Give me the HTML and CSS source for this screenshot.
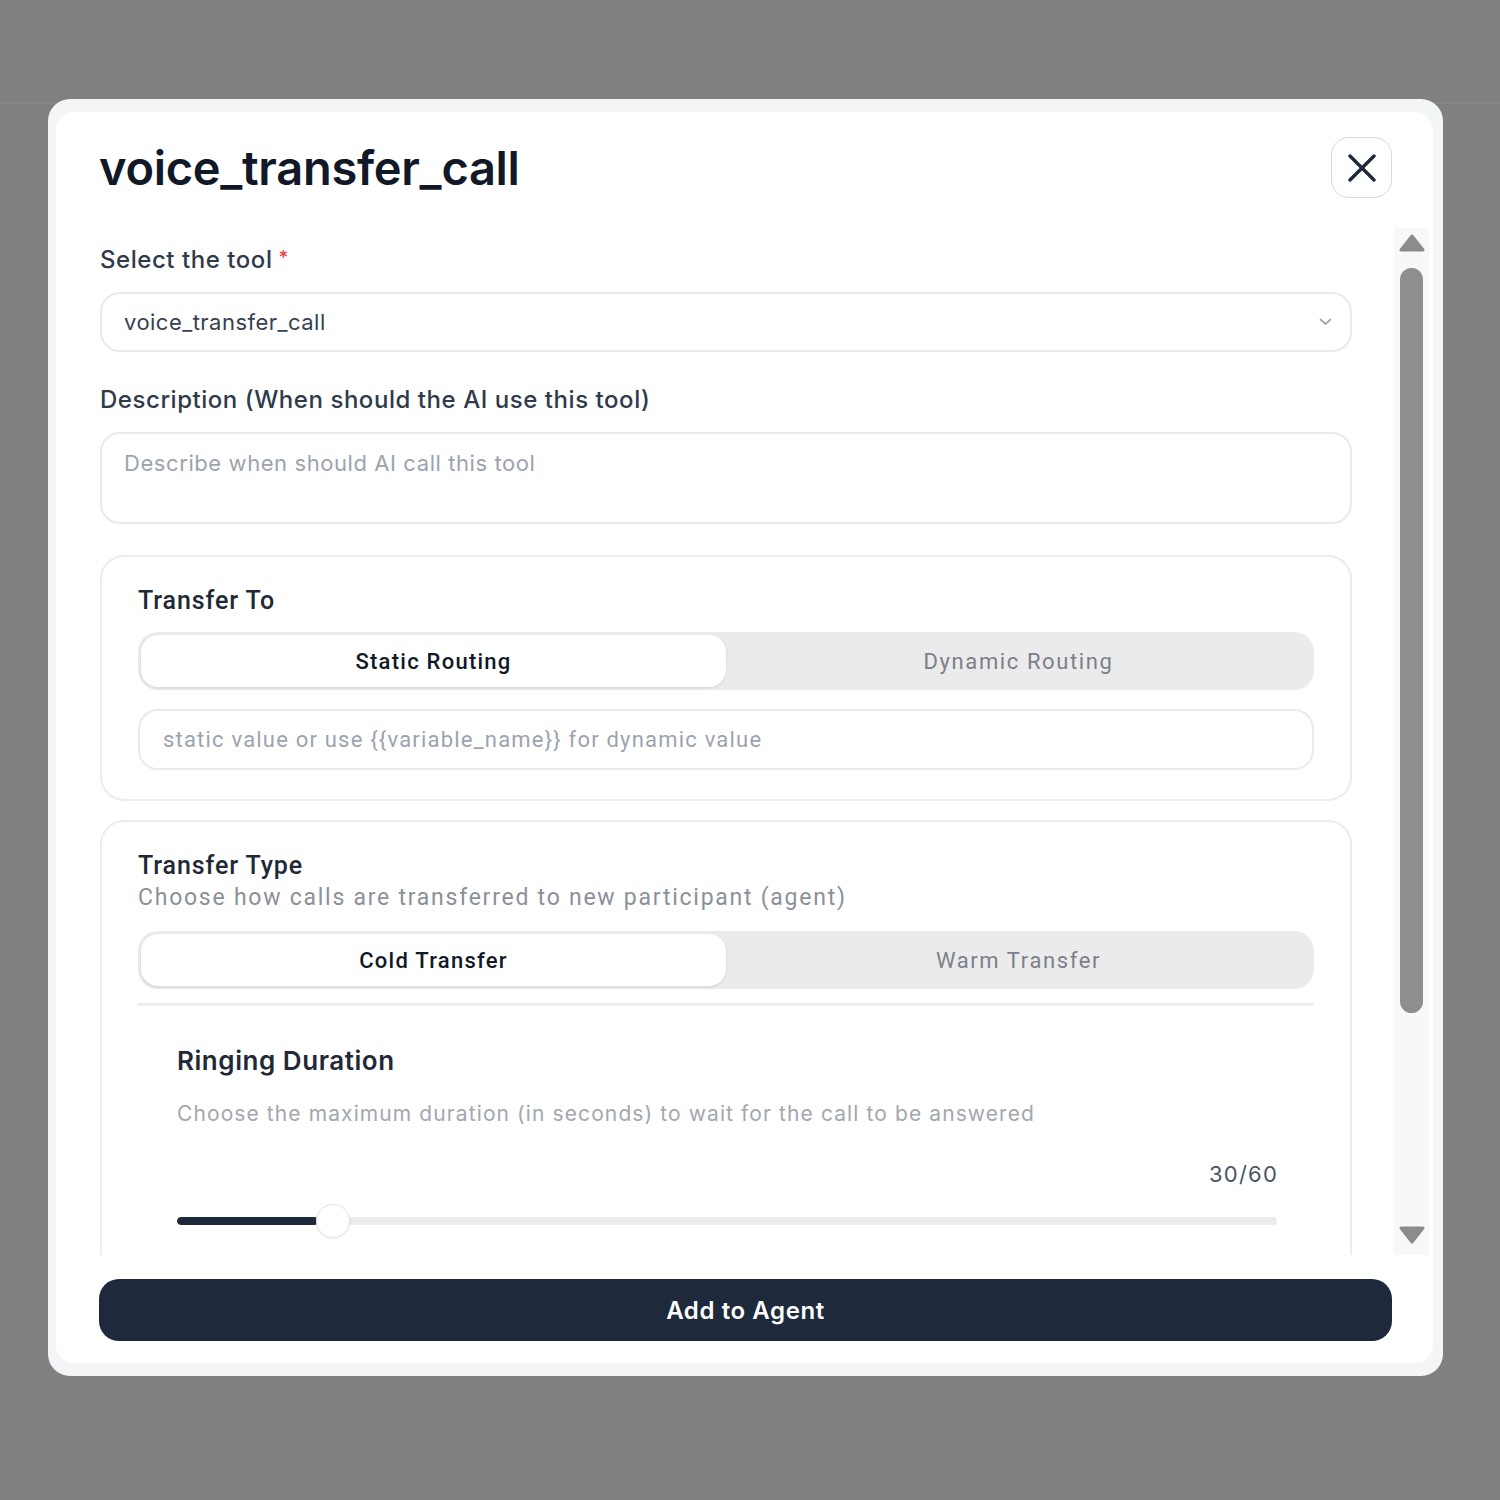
FILE: index.html
```html
<!DOCTYPE html>
<html lang="en">
<head>
<meta charset="utf-8">
<title>voice_transfer_call</title>
<link rel="stylesheet" href="styles.css">
</head>
<body>
<div class="topbar"></div>
<div class="modal">
  <div class="modal-inner">
    <div class="header">
      <h1 class="title">voice_transfer_call</h1>
      <button class="close" aria-label="Close">
        <svg width="28" height="28" viewBox="0 0 28 28"><path d="M2 2 L26 26 M26 2 L2 26" stroke="#1f2937" stroke-width="3.4" stroke-linecap="round" fill="none"/></svg>
      </button>
    </div>
    <div class="scroll-wrap">
      <div class="scroll-content">
        <div class="label">Select the tool<span class="req">*</span></div>
        <div class="select">
          <span>voice_transfer_call</span>
          <svg class="chev" width="13" height="8" viewBox="0 0 13 8"><path d="M1.5 1.5 L6.5 6 L11.5 1.5" stroke="#a3a7ae" stroke-width="1.8" fill="none" stroke-linecap="round" stroke-linejoin="round"/></svg>
        </div>
        <div class="label label-gap">Description (When should the AI use this tool)</div>
        <div class="textarea">Describe when should AI call this tool</div>

        <div class="card card-1">
          <div class="card-title">Transfer To</div>
          <div class="seg">
            <div class="seg-item active">Static Routing</div>
            <div class="seg-item">Dynamic Routing</div>
          </div>
          <div class="input">static value or use {{variable_name}} for dynamic value</div>
        </div>

        <div class="card card-2">
          <div class="card-title">Transfer Type</div>
          <div class="card-sub">Choose how calls are transferred to new participant (agent)</div>
          <div class="seg seg-2">
            <div class="seg-item active">Cold Transfer</div>
            <div class="seg-item">Warm Transfer</div>
          </div>
          <div class="divider"></div>
          <div class="ring">
            <div class="ring-title">Ringing Duration</div>
            <div class="ring-desc">Choose the maximum duration (in seconds) to wait for the call to be answered</div>
            <div class="ring-value">30/60</div>
            <div class="slider">
              <div class="track"><div class="fill" style="width:12.8%"></div></div>
              <div class="thumb" style="left:12.65%"></div>
            </div>
          </div>
        </div>
      </div>
      <div class="scrollbar">
        <svg class="arrow" width="28" height="21" viewBox="0 0 28 21"><path d="M14 3 L25 17 L3 17 Z" fill="#8c8c8c" stroke="#8c8c8c" stroke-width="3" stroke-linejoin="round"/></svg>
        <div class="thumb-bar"></div>
        <svg class="arrow arrow-down" width="28" height="21" viewBox="0 0 28 21"><path d="M3 4 L25 4 L14 18 Z" fill="#8c8c8c" stroke="#8c8c8c" stroke-width="3" stroke-linejoin="round"/></svg>
      </div>
    </div>
    <button class="primary">Add to Agent</button>
  </div>
</div>
</body>
</html>
```
FILE: styles.css
```css
* { box-sizing: border-box; }
html, body { margin: 0; padding: 0; }
body {
  width: 1500px;
  height: 1500px;
  background: #808080;
  font-family: Inter, "Noto Sans", sans-serif;
  position: relative;
  overflow: hidden;
}
.topbar {
  height: 104px;
  border-bottom: 2px solid #858585;
}
.modal {
  position: absolute;
  left: 48px;
  top: 99px;
  width: 1395px;
  height: 1277px;
  background: #f4f5f7;
  border-radius: 22px;
  padding: 13px 10px 13px 8px;
}
.modal-inner {
  height: 100%;
  background: #ffffff;
  border-radius: 18px;
  padding: 25px 41px 22px 43px;
  display: flex;
  flex-direction: column;
}
.header {
  height: 61px;
  display: flex;
  align-items: center;
  justify-content: space-between;
}
.title {
  margin: 0;
  font-family: Inter, sans-serif;
  font-size: 47px;
  font-weight: 600;
  color: #111827;
  letter-spacing: -0.3px;
  line-height: 1;
}
.close {
  width: 61px;
  height: 61px;
  border: 1.5px solid #d8d9dc;
  border-radius: 18px;
  background: #fff;
  display: flex;
  align-items: center;
  justify-content: center;
  padding: 0;
}
.scroll-wrap {
  margin-top: 30px;
  height: 1027px;
  display: flex;
  margin-right: -37px;
}
.scroll-content {
  width: 1253px;
  padding-left: 1px;
  padding-top: 16px;
  overflow: hidden;
}
.label {
  font-size: 24px;
  line-height: 32px;
  height: 32px;
  font-weight: 500;
  color: #2f3a4a;
  letter-spacing: 0.55px;
  margin-bottom: 16px;
}
.label-gap { margin-top: 32px; }
.req {
  color: #ef4444;
  font-size: 19px;
  line-height: 0;
  margin-left: 6px;
  vertical-align: 4px;
}
.select {
  height: 60px;
  border: 2px solid #e9eaec;
  border-radius: 20px;
  padding: 0 18px 0 22px;
  display: flex;
  align-items: center;
  justify-content: space-between;
  font-size: 22px;
  letter-spacing: 0.47px;
  color: #374151;
}
.textarea {
  height: 92px;
  border: 2px solid #e9eaec;
  border-radius: 20px;
  padding: 14px 22px 0;
  font-size: 22px;
  line-height: 30px;
  letter-spacing: 0.58px;
  color: #9ca3af;
}
.card {
  border: 2px solid #ebecee;
  border-radius: 24px;
  padding: 28px 36px 29px;
}
.card-1 { margin-top: 31px; }
.card-2 { margin-top: 19px; padding-bottom: 120px; }
.card-title {
  font-family: Roboto, sans-serif;
  font-size: 25px;
  line-height: 32px;
  font-weight: 500;
  letter-spacing: 0.9px;
  color: #1f2937;
}
.card-sub {
  font-family: Roboto, sans-serif;
  font-size: 23px;
  line-height: 32px;
  letter-spacing: 1.75px;
  color: #8b9099;
}
.seg {
  margin-top: 15px;
  height: 58px;
  background: #ebebeb;
  border-radius: 20px;
  padding: 3px;
  display: flex;
}
.seg-2 { margin-top: 17px; }
.seg-item {
  flex: 1;
  display: flex;
  align-items: center;
  justify-content: center;
  font-family: Roboto, sans-serif;
  font-size: 22px;
  font-weight: 400;
  letter-spacing: 1.6px;
  color: #7b808a;
  border-radius: 17px;
}
.seg-item.active {
  background: #ffffff;
  color: #111827;
  font-weight: 500;
  letter-spacing: 1.25px;
  box-shadow: 0 1px 3px rgba(0,0,0,0.10);
}
.input {
  margin-top: 19px;
  height: 61px;
  border: 2px solid #e9eaec;
  border-radius: 20px;
  padding: 0 23px;
  display: flex;
  align-items: center;
  font-family: Roboto, sans-serif;
  font-size: 22px;
  letter-spacing: 1.2px;
  color: #9ca3af;
}
.divider {
  margin-top: 14px;
  height: 3px;
  background: #eeeeef;
}
.ring {
  padding: 0 37px 0 39px;
}
.ring-title {
  margin-top: 38px;
  font-size: 26px;
  line-height: 34px;
  font-weight: 600;
  letter-spacing: 0.55px;
  color: #1f2937;
}
.ring-desc {
  margin-top: 21px;
  font-size: 21px;
  line-height: 30px;
  letter-spacing: 1.1px;
  color: #a3a7ae;
}
.ring-value {
  margin-top: 30px;
  text-align: right;
  font-size: 22px;
  line-height: 30px;
  letter-spacing: 1.2px;
  margin-right: -1px;
  color: #4b5563;
}
.slider {
  margin-top: 15px;
  height: 34px;
  position: relative;
  display: flex;
  align-items: center;
}
.track {
  width: 100%;
  height: 8px;
  background: #ececec;
  border-radius: 4px;
  overflow: hidden;
}
.fill {
  height: 100%;
  background: #1e293b;
  border-radius: 4px;
}
.thumb {
  position: absolute;
  top: 0;
  width: 34px;
  height: 34px;
  border-radius: 50%;
  background: #ffffff;
  border: 1.5px solid #e2e3e6;
  box-shadow: 0 1px 3px rgba(0,0,0,0.08);
}
.scrollbar {
  margin-left: auto;
  width: 35px;
  background: #f8f8f8;
  display: flex;
  flex-direction: column;
  align-items: center;
  padding-top: 5px;
  padding-bottom: 10px;
}
.arrow { display: block; }
.thumb-bar {
  margin-top: 14px;
  width: 23px;
  height: 745px;
  border-radius: 12px;
  background: #8e8e8e;
}
.arrow-down { margin-top: auto; }
.primary {
  margin-top: 24px;
  height: 62px;
  border: none;
  border-radius: 20px;
  background: #1e293b;
  color: #ffffff;
  font-family: Inter, sans-serif;
  font-size: 24px;
  font-weight: 600;
  letter-spacing: 0.6px;
  width: 100%;
}
```
